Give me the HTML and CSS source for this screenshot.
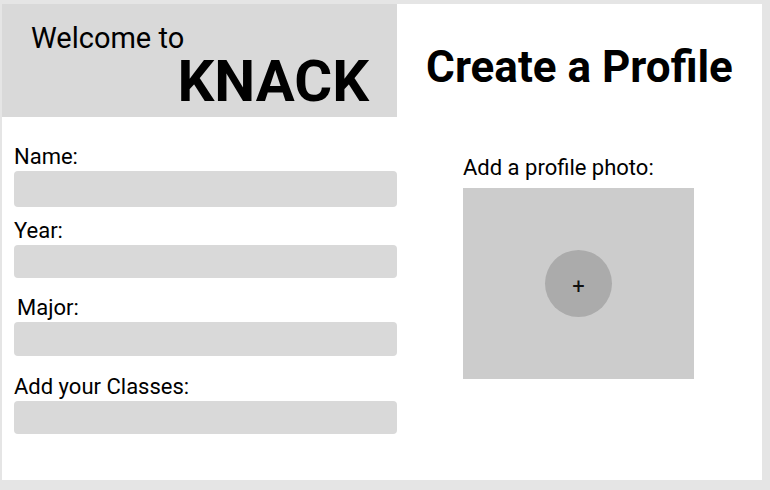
FILE: index.html
```html
<!DOCTYPE html>
<html lang="en">
<head>
<meta charset="utf-8">
<title>Create a Profile</title>
<link rel="stylesheet" href="styles.css">
</head>
<body>
<div class="page">
  <main class="card">
    <section class="left">
      <header class="brand">
        <div class="welcome">Welcome to</div>
        <div class="logo">KNACK</div>
      </header>
      <form class="form">
        <div class="field">
          <label class="label">Name:</label>
          <div class="input input-tall"></div>
        </div>
        <div class="field field-year">
          <label class="label">Year:</label>
          <div class="input"></div>
        </div>
        <div class="field field-major">
          <label class="label label-indent">Major:</label>
          <div class="input input-mid"></div>
        </div>
        <div class="field field-classes">
          <label class="label">Add your Classes:</label>
          <div class="input"></div>
        </div>
      </form>
    </section>
    <section class="right">
      <h1 class="title">Create a Profile</h1>
      <div class="photo-section">
        <div class="label">Add a profile photo:</div>
        <div class="photo-box">
          <div class="add-btn">+</div>
        </div>
      </div>
    </section>
  </main>
</div>
</body>
</html>
```

FILE: styles.css
```css
* { box-sizing: border-box; }
html, body { margin: 0; padding: 0; }
body {
  background: #e5e5e5;
  font-family: Roboto, "Liberation Sans", Arial, sans-serif;
  color: #000;
}
.page {
  padding: 4px 0 0 2px;
}
.card {
  width: 760px;
  height: 476px;
  background: #fff;
  display: grid;
  grid-template-columns: 395px 365px;
}
.brand {
  background: #d9d9d9;
  height: 113px;
  padding: 20px 28px 0 29px;
  display: flex;
  flex-direction: column;
}
.welcome {
  font-size: 29px;
  line-height: 28px;
  font-weight: 400;
}
.logo {
  font-size: 58px;
  line-height: 56px;
  font-weight: 700;
  text-align: right;
  margin-top: 1px;
}
.form {
  padding: 28px 0 0 12px;
  display: flex;
  flex-direction: column;
}
.field {
  display: flex;
  flex-direction: column;
  gap: 2px;
}
.field-year { margin-top: 12px; }
.field-major { margin-top: 18px; }
.field-classes { margin-top: 19px; }
.label {
  font-size: 22px;
  line-height: 24px;
}
.label-indent { padding-left: 3px; }
.input {
  width: 383px;
  height: 33px;
  background: #d9d9d9;
  border-radius: 4px;
}
.input-tall { height: 36px; }
.input-mid { height: 34px; }
.right {
  display: flex;
  flex-direction: column;
  align-items: center;
  padding-top: 41px;
}
.title {
  margin: 0;
  font-size: 44px;
  line-height: 44px;
  font-weight: 700;
  text-align: center;
}
.photo-section {
  align-self: flex-start;
  margin: 67px 0 0 66px;
  display: flex;
  flex-direction: column;
  gap: 8px;
}
.photo-box {
  width: 231px;
  height: 191px;
  background: #cccccc;
  display: flex;
  align-items: center;
  justify-content: center;
}
.add-btn {
  width: 67px;
  height: 67px;
  border-radius: 50%;
  background: #ababab;
  display: flex;
  align-items: center;
  justify-content: center;
  font-size: 22px;
  line-height: 1;
  color: #111;
  padding-top: 6px;
}
```
